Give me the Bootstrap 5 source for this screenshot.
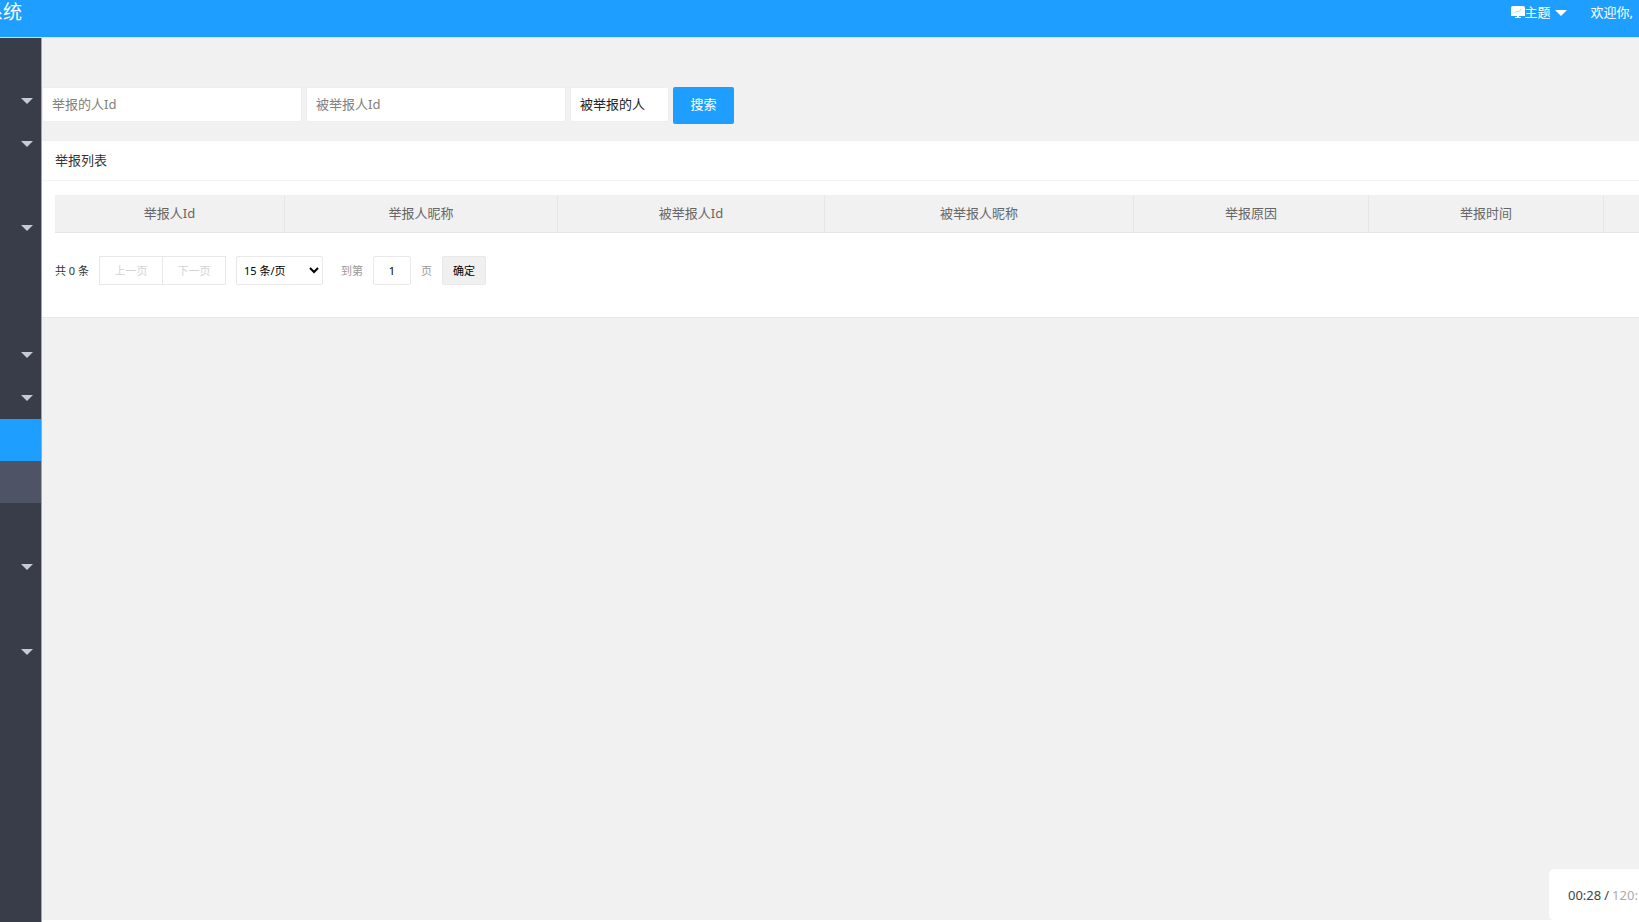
<!DOCTYPE html>
<html lang="zh-CN">
<head>
<meta charset="utf-8">
<meta name="viewport" content="width=device-width, initial-scale=1">
<title>举报列表</title>
<link href="https://cdn.jsdelivr.net/npm/bootstrap@5.3.0/dist/css/bootstrap.min.css" rel="stylesheet">
<script src="https://cdn.jsdelivr.net/npm/bootstrap@5.3.0/dist/js/bootstrap.bundle.min.js" defer></script>
<style>
  body { font: 13px/20px "Noto Sans", "Noto Sans CJK SC", sans-serif; color: #333; background: #fff; overflow: hidden; }
  .topbar { height: 38px; background: #1e9fff; border-bottom: 1px solid #b4f0ff; padding: 2px 6px 0 0; }
  .topbar a { color: #fff; text-decoration: none; }
  .brand { width: 22px; font-size: 19px; white-space: nowrap; }
  .arrow { display: block; width: 0; height: 0; border: 6px solid transparent; border-top-color: currentColor; border-bottom: 0; }
  .side { width: 42px; background: #393d49; border-right: 1px solid #a3a5ad; color: #c8cad4; }
  .side a { display: flex; align-items: center; justify-content: flex-end; height: 42px; padding-right: 8px; color: inherit; }
  .side li:nth-child(3n) a { height: 43px; }
  .side .current { background: #1e9fff; }
  .side .sub { background: #4e5465; }
  .content { background: #f1f1f1; min-width: 0; margin-bottom: 2px; }
  .filters { padding: 49px 0 17px; gap: 4px; }
  .field { height: 35px; border: 1px solid #eee; background: #fff; padding: 0 9px 2px; color: #222; border-radius: 2px; appearance: none; }
  .field::placeholder { color: #808080; opacity: 1; }
  .field-text { width: 260px; }
  .field-pick { width: 99px; }
  .btn-search { height: 37px; width: 61px; background: #1e9fff; color: #fff; border: 0; border-radius: 2px; font-size: 13px; padding: 0 0 2px; }
  .panel { background: #fff; border-bottom: 1px solid #e8e8e8; }
  .panel-title { font-size: 13px; line-height: 20px; padding: 9px 13px 10px; border-bottom: 1px solid #f3f3f3; margin: 0; font-weight: 400; }
  .panel-main { padding: 14px 0 32px 13px; overflow: hidden; }
  .data { width: 1784px; table-layout: fixed; margin: 0 0 23px; border-collapse: separate; border-spacing: 0; }
  .data th { height: 38px; padding: 0 0 2px; text-align: center; font-weight: 400; color: #666; background: #f1f1f1; border: solid #e6e6e6; border-width: 0 1px 1px 0; }
  .pager { font-size: 11px; gap: 10px; }
  .pager .box { height: 29px; border: 1px solid #e8e8e8; background: #fff; font-size: 11px; border-radius: 2px; padding: 0; color: #000; }
  .pager .step { width: 64px; color: #d2d2d2; border-radius: 0; }
  .pager .step + .step { margin-left: -1px; }
  .pager select.box { width: 87px; padding-left: 3px; }
  .pager .page { width: 38px; text-align: center; }
  .pager .go { width: 44px; background: #f0f0f0; }
  .pager .dim { color: #999; }
  .timer { right: 0; bottom: 2px; width: 90px; height: 51px; padding-left: 19px; background: #fff; border-radius: 5px 0 0 5px; gap: 3px; white-space: nowrap; color: #444; }
  .timer .total { color: #aaa; }
</style>
</head>
<body class="d-flex flex-column vh-100">
<header class="topbar d-flex justify-content-between flex-shrink-0">
  <a class="brand d-flex justify-content-end" href="#">系统</a>
  <nav class="d-flex">
    <a class="d-flex me-4" href="#"><svg class="mt-1" width="14" height="13" viewBox="0 0 14 13" aria-hidden="true"><path fill="#fff" d="M2 0h10q2 0 2 2v8H8v1h2v1H4v-1h2v-1H0V2q0-2 2-2z"/><path fill="none" stroke="#a8dbff" d="M3.500 6.500l2-1h2l3-2"/></svg><span class="me-1">主题</span><span class="arrow mt-2"></span></a>
    <a href="#">欢迎你,</a>
  </nav>
</header>
<div class="d-flex flex-grow-1">
  <nav class="side flex-shrink-0" aria-label="菜单">
    <ul class="list-unstyled m-0">
      <li><a href="#"></a></li>
      <li><a href="#"><span class="arrow"></span></a></li>
      <li><a href="#"><span class="arrow"></span></a></li>
      <li><a href="#"></a></li>
      <li><a href="#"><span class="arrow"></span></a></li>
      <li><a href="#"></a></li>
      <li><a href="#"></a></li>
      <li><a href="#"><span class="arrow"></span></a></li>
      <li><a href="#"><span class="arrow"></span></a></li>
      <li><a class="current" href="#"></a></li>
      <li><a class="sub" href="#"></a></li>
      <li><a href="#"></a></li>
      <li><a href="#"><span class="arrow"></span></a></li>
      <li><a href="#"></a></li>
      <li><a href="#"><span class="arrow"></span></a></li>
    </ul>
  </nav>
  <main class="content flex-grow-1">
    <form class="filters d-flex">
      <input class="field field-text" type="text" placeholder="举报的人Id" aria-label="举报的人Id">
      <input class="field field-text" type="text" placeholder="被举报人Id" aria-label="被举报人Id">
      <select class="field field-pick" aria-label="被举报的人"><option>被举报的人</option></select>
      <button class="btn btn-search" type="button">搜索</button>
    </form>
    <section class="panel">
      <h2 class="panel-title">举报列表</h2>
      <div class="panel-main">
        <table class="data">
          <colgroup><col style="width:230px"><col style="width:273px"><col style="width:267px"><col style="width:309px"><col style="width:235px"><col style="width:235px"><col style="width:235px"></colgroup>
          <thead><tr><th>举报人Id</th><th>举报人昵称</th><th>被举报人Id</th><th>被举报人昵称</th><th>举报原因</th><th>举报时间</th><th></th></tr></thead>
        </table>
        <div class="pager d-flex align-items-center">
          <span>共 0 条</span>
          <div class="d-flex"><button class="box step" type="button" disabled>上一页</button><button class="box step" type="button" disabled>下一页</button></div>
          <select class="box" aria-label="每页条数"><option>15 条/页</option></select>
          <label class="dim ms-2" for="page">到第</label>
          <input class="box page" id="page" type="text" value="1">
          <span class="dim">页</span>
          <button class="box go" type="button">确定</button>
        </div>
      </div>
    </section>
  </main>
</div>
<div class="timer position-fixed d-flex align-items-center"><span>00:28</span><span>/</span><span class="total">120:</span></div>
</body>
</html>
